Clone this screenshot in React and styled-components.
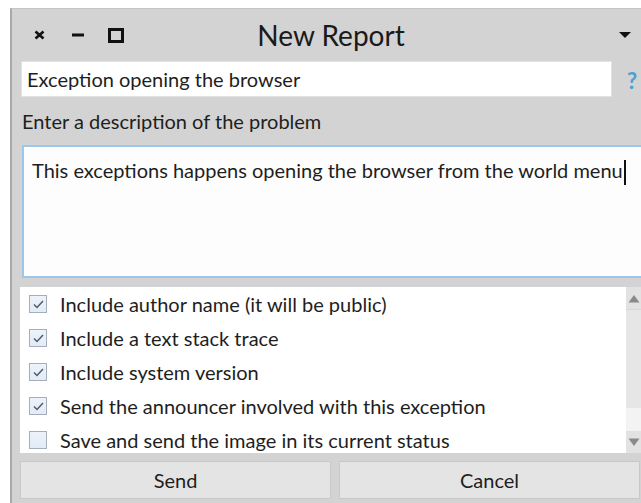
import React from 'react';
import styled, { createGlobalStyle } from 'styled-components';

const GlobalStyle = createGlobalStyle`
  html, body {
    margin: 0;
    padding: 0;
    background: #ffffff;
    overflow: hidden;
  }
  body {
    font-family: Lato, "Noto Sans", sans-serif;
    color: #1e1e1e;
  }
`;

const Window = styled.div`
  margin: 8px 0 0 10px;
  width: 650px;
  height: 500px;
  background: #d3d3d3;
  border-left: 2px solid #a9a9a9;
  border-top: 1px solid #c4c4c4;
  display: flex;
  flex-direction: column;
  padding: 0 0 0 9px;
  box-sizing: border-box;
`;

const TitleBar = styled.div`
  height: 52px;
  display: flex;
  align-items: center;
  position: relative;
`;

const WindowButtons = styled.div`
  display: flex;
  align-items: center;
  padding-left: 13px;
`;

const IconSlot = styled.div`
  display: flex;
  align-items: center;
  margin-right: ${p => p.$gap}px;
`;

const Title = styled.div`
  position: absolute;
  left: 0;
  width: 620px;
  text-align: center;
  font-size: 28px;
  color: #1a1a1a;
  pointer-events: none;
`;

const MenuArrow = styled.div`
  margin-left: auto;
  margin-right: 29px;
  width: 0;
  height: 0;
  border-left: 6px solid transparent;
  border-right: 6px solid transparent;
  border-top: 6px solid #111;
`;

const FieldRow = styled.div`
  display: flex;
  align-items: center;
  gap: 15px;
`;

const TextField = styled.div`
  width: 591px;
  height: 36px;
  box-sizing: border-box;
  background: #fff;
  border: 1px solid #e2e2e2;
  display: flex;
  align-items: center;
  padding-left: 5px;
  font-size: 20px;
`;

const Help = styled.span`
  color: #4d9ed1;
  font-weight: 700;
  font-size: 22px;
  margin-top: 3px;
`;

const Label = styled.div`
  height: 48px;
  display: flex;
  align-items: center;
  padding-left: 1px;
  font-size: 20px;
`;

const TextArea = styled.div`
  height: 133px;
  box-sizing: border-box;
  background: #fdfdfd;
  border: 2px solid #9cc6ea;
  padding: 11px 0 0 8px;
  font-size: 20px;
  margin-left: 1px;
`;

const Caret = styled.span`
  display: inline-block;
  width: 2px;
  height: 25px;
  background: #111;
  vertical-align: middle;
  margin-left: 1px;
`;

const ListBox = styled.div`
  margin-top: 9px;
  width: 622px;
  height: 166px;
  display: flex;
  background: #fff;
  overflow: hidden;
  margin-left: -1px;
`;

const Rows = styled.div`
  flex: 1;
`;

const Row = styled.div`
  height: 34px;
  display: flex;
  align-items: center;
  gap: 13px;
  padding-left: 9px;
  font-size: 20px;
`;

const Box = styled.div`
  width: 18px;
  height: 18px;
  box-sizing: border-box;
  border: 1px solid #a6aebb;
  background: linear-gradient(#eef3fa, #e2ebf6);
  display: flex;
  align-items: center;
  justify-content: center;
`;

const ScrollBar = styled.div`
  width: 16px;
  display: flex;
  flex-direction: column;
  background: #f3f3f3;
`;

const ScrollArrow = styled.div`
  height: 22px;
  background: #e2e2e2;
  display: flex;
  align-items: center;
  justify-content: center;
`;

const Thumb = styled.div`
  height: 98px;
  background: #e6e6e6;
  border-top: 1px solid #d8d8d8;
`;

const Track = styled.div`
  flex: 1;
`;

const ButtonRow = styled.div`
  margin-top: 8px;
  display: flex;
  gap: 8px;
  margin-left: -1px;
`;

const Button = styled.div`
  width: ${p => p.$width}px;
  height: 38px;
  box-sizing: border-box;
  background: #e4e4e4;
  border: 1px solid #c8c8c8;
  display: flex;
  align-items: center;
  justify-content: center;
  font-size: 20px;
  color: #1e1e1e;
`;

const options = [
  { label: 'Include author name (it will be public)', checked: true },
  { label: 'Include a text stack trace', checked: true },
  { label: 'Include system version', checked: true },
  { label: 'Send the announcer involved with this exception', checked: true },
  { label: 'Save and send the image in its current status', checked: false },
];

const CloseIcon = () => (
  <svg width="11" height="10" viewBox="0 0 11 10">
    <path d="M1.5 1.5 L9.5 8.5 M9.5 1.5 L1.5 8.5" stroke="#111" strokeWidth="2.6" />
  </svg>
);

const MinimizeIcon = () => (
  <svg width="12" height="4" viewBox="0 0 12 4">
    <rect x="0" y="0.5" width="12" height="3" fill="#111" />
  </svg>
);

const MaximizeIcon = () => (
  <svg width="16" height="15" viewBox="0 0 16 15">
    <rect x="1.5" y="1.5" width="13" height="12" fill="none" stroke="#111" strokeWidth="3" />
  </svg>
);

const Tick = () => (
  <svg width="13" height="11" viewBox="0 0 13 11">
    <path d="M2 5.5 L5 8.5 L11 2" fill="none" stroke="#4b5b72" strokeWidth="1.5" />
  </svg>
);

const Arrow = ({ up }) => (
  <svg width="12" height="9" viewBox="0 0 12 9">
    <path d={up ? 'M6 1 L11.5 8.5 L0.5 8.5 Z' : 'M0.5 0.5 L11.5 0.5 L6 8 Z'} fill="#8a8a8a" />
  </svg>
);

export default function App() {
  return (
    <>
      <GlobalStyle />
      <Window>
        <TitleBar>
          <WindowButtons>
            <IconSlot $gap={27}><CloseIcon /></IconSlot>
            <IconSlot $gap={24}><MinimizeIcon /></IconSlot>
            <IconSlot $gap={0}><MaximizeIcon /></IconSlot>
          </WindowButtons>
          <Title>New Report</Title>
          <MenuArrow />
        </TitleBar>

        <FieldRow>
          <TextField>Exception opening the browser</TextField>
          <Help>?</Help>
        </FieldRow>

        <Label>Enter a description of the problem</Label>

        <TextArea>
          This exceptions happens opening the browser from the world menu
          <Caret />
        </TextArea>

        <ListBox>
          <Rows>
            {options.map(opt => (
              <Row key={opt.label}>
                <Box>{opt.checked && <Tick />}</Box>
                {opt.label}
              </Row>
            ))}
          </Rows>
          <ScrollBar>
            <ScrollArrow><Arrow up /></ScrollArrow>
            <Thumb />
            <Track />
            <ScrollArrow><Arrow /></ScrollArrow>
          </ScrollBar>
        </ListBox>

        <ButtonRow>
          <Button $width={311}>Send</Button>
          <Button $width={301}>Cancel</Button>
        </ButtonRow>
      </Window>
    </>
  );
}
